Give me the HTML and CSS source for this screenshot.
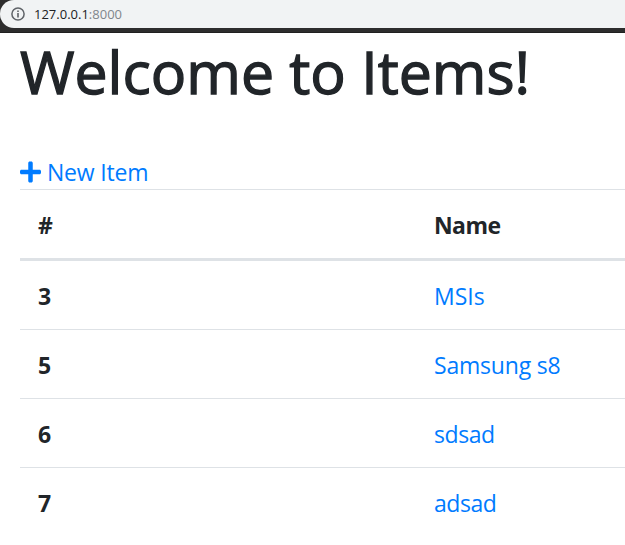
FILE: index.html
```html
<!DOCTYPE html>
<html lang="en">
<head>
<meta charset="utf-8">
<title>Items</title>
<link rel="stylesheet" href="styles.css">
</head>
<body>
<div class="toolbar">
  <div class="address">
    <svg class="info" viewBox="0 0 14 14"><circle cx="7" cy="7" r="6.1" fill="none" stroke="#5f6368" stroke-width="1.5"/><path d="M6.2 3.4h1.6v1.5H6.2zM6.2 6.1h1.6v4.5H6.2z" fill="#5f6368"/></svg>
    <span class="url">127.0.0.1<span class="port">:8000</span></span>
  </div>
</div>
<main class="page">
  <h1 class="title">Welcome to Items!</h1>
  <a class="new"><svg class="plus" viewBox="0 0 448 512"><path fill="currentColor" d="M416 208H272V64c0-17.670-14.330-32-32-32h-32c-17.670 0-32 14.330-32 32v144H32c-17.670 0-32 14.330-32 32v32c0 17.670 14.330 32 32 32h144v144c0 17.670 14.330 32 32 32h32c17.670 0 32-14.330 32-32V304h144c17.670 0 32-14.330 32-32v-32c0-17.670-14.330-32-32-32z"/></svg><span>New Item</span></a>
  <table class="items">
    <thead><tr><th class="id">#</th><th>Name</th></tr></thead>
    <tbody>
      <tr><th>3</th><td><a class="caps">MSIs</a></td></tr>
      <tr><th>5</th><td><a>Samsung s8</a></td></tr>
      <tr><th>6</th><td><a class="short">sdsad</a></td></tr>
      <tr><th>7</th><td><a class="short">adsad</a></td></tr>
    </tbody>
  </table>
</main>
</body>
</html>
```
FILE: styles.css
```css
* { box-sizing: border-box; }
body {
  margin: 0;
  height: 545px;
  overflow: hidden;
  background: #fff;
  color: #212529;
  font: 400 23px/34px "Open Sans", "Noto Sans", sans-serif;
  letter-spacing: -0.2px;
}
.toolbar {
  height: 33px;
  background: #2d2d2d;
  border-bottom: 1px solid #202020;
}
.address {
  display: flex;
  align-items: center;
  height: 28px;
  padding-left: 11px;
  background: #f1f3f4;
  border-radius: 14px 0 0 14px;
}
.info { width: 14px; height: 14px; margin-right: 9px; }
.url {
  font: 13px/28px "Open Sans", sans-serif;
  letter-spacing: 0;
  color: #202124;
}
.port { color: #80868b; }
.page { padding-left: 20px; }
.title {
  margin: 0;
  padding-top: 3px;
  height: 122px;
  font-size: 59px;
  line-height: 71px;
  font-weight: 400;
  letter-spacing: 0;
  -webkit-text-stroke: 1.3px #212529;
  white-space: nowrap;
}
a { color: #007bff; }
.new { display: flex; align-items: center; height: 34px; }
.plus { width: 21px; height: 24px; margin-right: 6px; }
.items {
  width: 625px;
  table-layout: fixed;
  border-collapse: separate;
  border-spacing: 0;
}
.items th, .items td {
  height: 69px;
  padding: 2px 18px 0;
  border-top: 1px solid #dee2e6;
  text-align: left;
  vertical-align: middle;
}
.items th { letter-spacing: -0.6px; }
.items .caps { letter-spacing: 0; }
.items .short { letter-spacing: -0.45px; }
.items .id { width: 396px; }
.items thead th { height: 72px; border-bottom: 3px solid #dee2e6; }
.items tbody tr:first-child > * { height: 68px; border-top: 0; }
```
